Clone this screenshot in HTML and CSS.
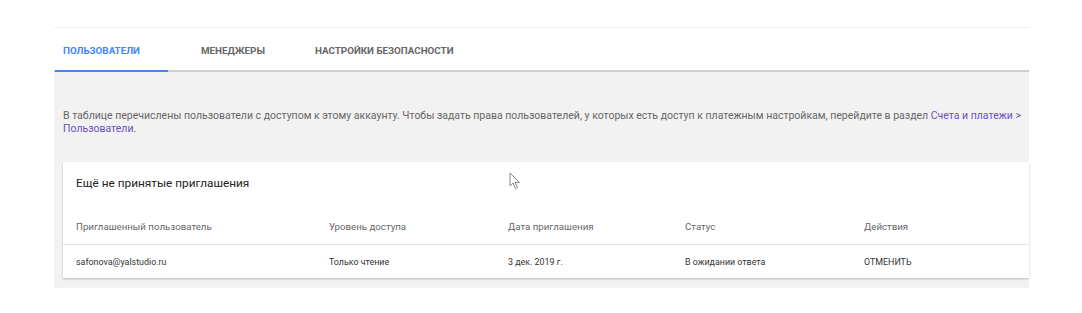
FILE: index.html
```html
<!DOCTYPE html>
<html lang="ru">
<head>
    <meta charset="UTF-8">
    <meta name="viewport" content="width=device-width, initial-scale=1.0">
    <title>Доступ к аккаунту</title>
    <link rel="stylesheet" href="styles.css">
</head>
<body>
    <div class="panel">
        <nav class="tabs">
            <a href="#" class="tab tab-users active">Пользователи</a>
            <a href="#" class="tab tab-managers">Менеджеры</a>
            <a href="#" class="tab tab-security">Настройки безопасности</a>
        </nav>
        <div class="content">
            <p class="intro">В таблице перечислены пользователи с доступом к этому аккаунту. Чтобы задать права пользователей, у которых есть доступ к платежным настройкам, перейдите в раздел <a href="#">Счета и платежи &gt; Пользователи</a>.</p>
            <section class="card">
                <h2 class="card-title">Ещё не принятые приглашения</h2>
                <div class="table">
                    <div class="row head">
                        <span>Приглашенный пользователь</span>
                        <span>Уровень доступа</span>
                        <span>Дата приглашения</span>
                        <span>Статус</span>
                        <span>Действия</span>
                    </div>
                    <div class="row">
                        <span>safonova@yalstudio.ru</span>
                        <span>Только чтение</span>
                        <span>3 дек. 2019 г.</span>
                        <span>В ожидании ответа</span>
                        <a href="#" class="action">Отменить</a>
                    </div>
                </div>
                <svg class="cursor" width="12" height="18" viewBox="0 0 12 18">
                    <path d="M1 1 L1 14 L4 11 L6.5 16.5 L8.5 15.5 L6 10.5 L10.5 10.5 Z" fill="#fff" stroke="#888" stroke-width="1" stroke-linejoin="round"/>
                </svg>
            </section>
        </div>
    </div>
</body>
</html>
```

FILE: styles.css
```css
/* --- General Setup --- */
:root {
    --bg-color: #ffffff;
    --panel-bg: #f2f2f2;
    --blue: #4285f4;
    --link-color: #6c4fc0;
    --text-color: #666;
    --dark-text: #222;
    --border-color: #e4e4e4;
    --font-primary: Roboto, "Noto Sans", sans-serif;
}
body {
    margin: 0;
    background-color: var(--bg-color);
    font-family: var(--font-primary);
    color: var(--text-color);
}

.panel {
    margin: 27px 0 0 54px;
    width: 975px;
}

/* --- Tabs --- */
.tabs {
    display: flex;
    height: 42px;
    border-top: 1px solid #f0f0f0;
    border-bottom: 2px solid #cfcfcf;
    background-color: #fff;
}
.tab {
    display: flex;
    align-items: center;
    box-sizing: border-box;
    padding: 3px 8px 0;
    margin-bottom: -2px;
    border-bottom: 2px solid transparent;
    font-size: 9.8px;
    font-weight: 700;
    text-transform: uppercase;
    color: #666;
    text-decoration: none;
}
.tab.active {
    color: var(--blue);
    border-bottom-color: var(--blue);
}
.tab-users { width: 113px; margin-left: 1px; }
.tab-managers { width: 114px; margin-left: 25px; }
.tab-security { width: 200px; }

/* --- Content --- */
.content {
    background-color: var(--panel-bg);
    padding: 37px 0 10px 9px;
}
.intro {
    margin: 0 0 27px;
    font-size: 10.5px;
    line-height: 13px;
    color: var(--text-color);
    padding-right: 4px;
}
.intro a {
    color: var(--link-color);
    text-decoration: none;
}

/* --- Card --- */
.card {
    position: relative;
    background-color: #fff;
    box-shadow: 0 1px 2px rgba(0, 0, 0, 0.25);
}
.card-title {
    margin: 0;
    padding: 14px 13px 0;
    height: 29px;
    font-size: 11.8px;
    font-weight: 400;
    color: var(--dark-text);
}
.row {
    display: grid;
    grid-template-columns: 253px 179px 177px 179px 1fr;
    align-items: center;
    padding: 0 13px;
    height: 33px;
    font-size: 8.9px;
    color: #333;
}
.row.head {
    height: 40px;
    padding-top: 4px;
    box-sizing: border-box;
    border-bottom: 1px solid var(--border-color);
    font-size: 9.7px;
    color: var(--text-color);
}
.action {
    color: #333;
    text-transform: uppercase;
    text-decoration: none;
}
.cursor {
    position: absolute;
    left: 446px;
    top: 10px;
}
```
